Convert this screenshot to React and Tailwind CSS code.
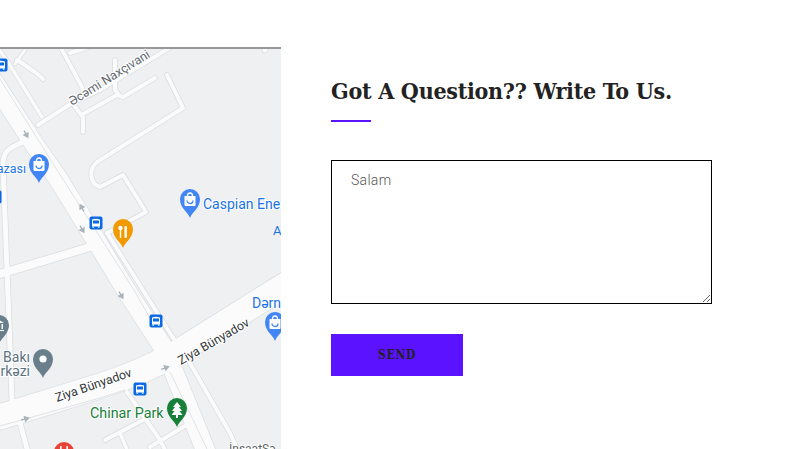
const roads = [
  { d: "M-29 47 L36 147 L57 177 L97 242 L126 290 L165 350 L205 449 L215 470", w: 19 },
  { d: "M107 233 L170 333 L178 345", w: 4 },
  { d: "M190 363 L230 433 L240 455", w: 4 },
  { d: "M-2 48 L8 62 L42 117", w: 3.5 },
  { d: "M15 64 L25 50", w: 3 },
  { d: "M17 60 L35 72 C40 76 42 78 43 79", w: 4 },
  { d: "M-10 420 L100 386 C125 378 150 368 175 354 L290 282", w: 25 },
  { d: "M26 140 C12 148 3 148 3 165 L12 400", w: 5 },
  { d: "M38 125 L72 103 L100 90 L166 50 L172 46", w: 4 },
  { d: "M60 46 L82 87 L84 97", w: 4 },
  { d: "M70 53 L92 46", w: 4 },
  { d: "M72 103 L83 117 L83 132", w: 4 },
  { d: "M83 114 L117 95 L123 97 L155 78", w: 4 },
  { d: "M115 60 L115 90 L120 96", w: 4 },
  { d: "M167 75 L183 108 L97 162 C88 170 90 184 100 187 L123 175 L146 212 L107 233", w: 4 },
  { d: "M265 46 L265 50", w: 5 },
  { d: "M0 274 L90 247", w: 8 },
  { d: "M20 423 L28 452", w: 5 },
  { d: "M127 392 L160 440 L166 452", w: 4 },
  { d: "M105 440 L147 418", w: 4 },
  { d: "M120 433 L128 452", w: 3.5 },
  { d: "M150 447 L190 423", w: 4 },
];

const arrows = [
  [26, 134, -30],
  [82, 208, 150],
  [82, 229, -30],
  [121, 295, -30],
  [165, 368, -110],
  [25, 419, -105],
];

function Pin({ x, y, color, children }) {
  return (
    <g transform={`translate(${x} ${y})`}>
      <path d="M0 15 C-2 9 -10 5 -10 -4 A10 10 0 1 1 10 -4 C10 5 2 9 0 15 Z" fill={color} />
      {children}
    </g>
  );
}

const Bag = () => (
  <g>
    <path d="M-5.5 -7 H5.5 V2 Q5.5 3 4.5 3 H-4.5 Q-5.5 3 -5.5 2 Z" fill="#fff" />
    <path d="M-2.5 -7 A2.5 3 0 0 1 2.5 -7" fill="none" stroke="#fff" strokeWidth="1.3" />
    <path d="M-3 -2.5 A3 3 0 0 0 3 -2.5" fill="none" stroke="#4285f4" strokeWidth="1.3" />
  </g>
);

function Bus({ x, y }) {
  return (
    <g transform={`translate(${x} ${y})`}>
      <rect x="-6.5" y="-6.5" width="13" height="13" rx="2" fill="#0b69e3" />
      <path d="M-4 -3.5 Q0 -5 4 -3.5 V3.5 H-4 Z" fill="#fff" />
      <rect x="-3" y="-2.5" width="6" height="3" fill="#0b69e3" />
      <rect x="-3.5" y="3.5" width="1.6" height="1.2" fill="#fff" />
      <rect x="1.9" y="3.5" width="1.6" height="1.2" fill="#fff" />
    </g>
  );
}

function Arrow({ x, y, r }) {
  return (
    <path
      transform={`translate(${x} ${y}) rotate(${r})`}
      d="M0 -4 L0 2 M-2.2 0 L0 3.6 L2.2 0 Z"
      fill="#aab3ba"
      stroke="#aab3ba"
      strokeWidth="1.4"
    />
  );
}

function Label({ children, ...props }) {
  return (
    <text stroke="#fff" strokeWidth="2" paintOrder="stroke" {...props}>
      {children}
    </text>
  );
}

function MapDrawing() {
  return (
    <svg width="281" height="402" viewBox="0 47 281 402" className="block [font-family:Roboto,sans-serif]">
      <rect x="0" y="47" width="281" height="402" fill="#eef0f1" />
      {roads.map((r, i) => (
        <path key={i} d={r.d} fill="none" stroke="#d9dce0" strokeWidth={r.w + 1.4} strokeLinecap="round" strokeLinejoin="round" />
      ))}
      {roads.map((r, i) => (
        <path key={i} d={r.d} fill="none" stroke="#fbfbfc" strokeWidth={r.w} strokeLinecap="round" strokeLinejoin="round" />
      ))}
      <path d="M-20 47 L57 170 L134 290 L150 318" fill="none" stroke="#dfe2e5" strokeWidth="1" />
      <path d="M170 372 L207 449" fill="none" stroke="#dfe2e5" strokeWidth="1" />
      <path d="M0 426 L100 398 L125 390" fill="none" stroke="#dfe2e5" strokeWidth="1" />
      {arrows.map(([x, y, r], i) => (
        <Arrow key={i} x={x} y={y} r={r} />
      ))}

      <rect x="0" y="47" width="281" height="2" fill="#979797" />

      <Label transform="translate(72 106) rotate(-32)" fontSize="12.5" fill="#62696f">Əcəmi Naxçıvani</Label>
      <Label x="26" y="173" textAnchor="end" fontSize="12.5" fill="#1a73e8">azası</Label>
      <Label x="203" y="209" fontSize="14" fill="#1a73e8">Caspian Ene</Label>
      <text x="273" y="235" fontSize="13" fill="#1a73e8">A</text>
      <Label x="252" y="308" fontSize="14" fill="#1a73e8">Dərn</Label>
      <Label x="30" y="362" textAnchor="end" fontSize="14" fill="#5b7282">Bakı</Label>
      <Label x="30" y="376" textAnchor="end" fontSize="14" fill="#5b7282">rkəzi</Label>
      <Label transform="translate(57 402) rotate(-19)" fontSize="12.4" fill="#33373a">Ziya Bünyadov</Label>
      <Label transform="translate(181 365) rotate(-30)" fontSize="12.4" fill="#33373a">Ziya Bünyadov</Label>
      <Label x="90" y="418" fontSize="14.3" fill="#188038">Chinar Park</Label>
      <Label x="229" y="453" fontSize="12" fill="#5f6368">İnşaatSə</Label>

      <Pin x={39} y={168} color="#4285f4"><Bag /></Pin>
      <Pin x={190} y={203} color="#4285f4"><Bag /></Pin>
      <Pin x={275} y={326} color="#4285f4"><Bag /></Pin>
      <Pin x={123} y={233} color="#f29900">
        <circle cx="-2.5" cy="-5" r="2.2" fill="#fff" />
        <rect x="-3.2" y="-5" width="1.4" height="10" fill="#fff" />
        <rect x="1.5" y="-7" width="2.4" height="12" rx="1" fill="#fff" />
      </Pin>
      <Pin x={43} y={363} color="#6a7f8c"><circle cx="0" cy="-4" r="3.6" fill="#fff" /></Pin>
      <Pin x={-1} y={329} color="#6a7f8c">
        <path d="M-5 -6 L0 -9 L5 -6 Z M-4 -5 H-2.5 V0 H-4 Z M-0.7 -5 H0.7 V0 H-0.7 Z M2.5 -5 H4 V0 H2.5 Z M-5 1 H5 V2 H-5 Z" fill="#fff" />
      </Pin>
      <Pin x={177} y={412} color="#188038">
        <path d="M0 -10 L4 -5 H2 L5 -1 H2.5 L5.5 3 H1 V6 H-1 V3 H-5.5 L-2.5 -1 H-5 L-2 -5 H-4 Z" fill="#fff" />
      </Pin>
      <Pin x={64} y={456} color="#ea4335">
        <rect x="-4" y="-10" width="1.6" height="8" fill="#fff" />
        <rect x="2.4" y="-10" width="1.6" height="8" fill="#fff" />
      </Pin>
      <Bus x={1} y={65} />
      <Bus x={-5} y={197} />
      <Bus x={96} y={223} />
      <Bus x={156} y={321} />
      <Bus x={140} y={389} />
    </svg>
  );
}

export default function App() {
  return (
    <div className="flex h-[449px] w-[808px] overflow-hidden bg-white">
      <div className="mt-[47px] w-[281px] shrink-0">
        <MapDrawing />
      </div>
      <div className="ml-[50px] flex w-[381px] flex-col pt-[75px]">
        <h2 className="text-[23px] font-bold leading-[32px] tracking-[-0.27px] text-[#222] [font-family:'DejaVu_Serif',serif] [font-stretch:condensed] whitespace-nowrap">
          Got A Question?? Write To Us.
        </h2>
        <div className="mt-[13px] h-[2px] w-[40px] bg-[#5a12ff]" />
        <textarea
          className="mt-[38px] block h-[144px] w-[381px] border border-black px-[19px] py-[10px] text-[14px] leading-[18px] tracking-[0.3px] font-light outline-none [font-family:Roboto,sans-serif] placeholder:text-[#555]"
          placeholder="Salam"
        />
        <button className="mt-[30px] flex h-[42px] w-[132px] items-center justify-center bg-[#5a12ff] text-[12px] font-bold tracking-[0.7px] text-[#222] [font-family:'DejaVu_Serif',serif] [font-stretch:condensed]">
          SEND
        </button>
      </div>
    </div>
  );
}
